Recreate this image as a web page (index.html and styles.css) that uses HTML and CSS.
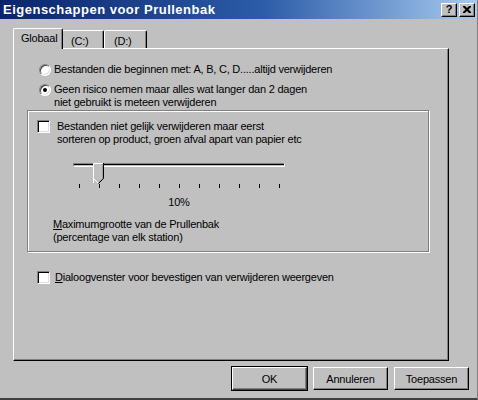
FILE: index.html
```html
<!DOCTYPE html>
<html lang="nl">
<head>
    <meta charset="UTF-8">
    <title>Eigenschappen voor Prullenbak</title>
    <link rel="stylesheet" href="styles.css">
</head>
<body>
    <div class="window">
        <div class="titlebar">
            <span class="title">Eigenschappen voor Prullenbak</span>
            <div class="title-buttons">
                <span class="title-btn help">?</span>
                <span class="title-btn close">
                    <svg width="8" height="7" viewBox="0 0 8 7">
                        <path d="M0 0h2l2 2 2-2h2v1l-2.5 2.5 2.5 2.5v1h-2l-2-2-2 2h-2v-1l2.5-2.5-2.5-2.5z" fill="#000"/>
                    </svg>
                </span>
            </div>
        </div>

        <div class="tabs">
            <div class="tab active">Globaal</div>
            <div class="tab">(C:)</div>
            <div class="tab">(D:)</div>
        </div>

        <div class="panel">
            <div class="option first">
                <span class="radio"></span>
                <span>Bestanden die beginnen met: A, B, C, D.....altijd verwijderen</span>
            </div>
            <div class="option">
                <span class="radio checked"></span>
                <span>Geen risico nemen maar alles wat langer dan 2 dagen<br>niet gebruikt is meteen verwijderen</span>
            </div>

            <div class="group">
                <div class="check-row">
                    <span class="checkbox"></span>
                    <span>Bestanden niet gelijk verwijderen maar eerst<br>sorteren op product, groen afval apart van papier etc</span>
                </div>

                <div class="slider">
                    <div class="track"></div>
                    <svg class="thumb" width="11" height="21" viewBox="0 0 11 21">
                        <path d="M0.5 20V0.5H10" fill="none" stroke="#fff"/>
                        <path d="M10.5 0V15.5L5.5 20.5" fill="none" stroke="#000"/>
                        <path d="M9.5 1V15L5.5 19" fill="none" stroke="#808080"/>
                        <path d="M1 1H9.5V15L5.5 19L1 15Z" fill="#c0c0c0"/>
                        <path d="M0.5 15.5L5 20" fill="none" stroke="#fff"/>
                    </svg>
                </div>
                <div class="ticks">
                    <span></span><span></span><span></span><span></span><span></span><span></span>
                    <span></span><span></span><span></span><span></span><span></span>
                </div>
                <div class="percent">10%</div>

                <div class="size-label"><u>M</u>aximumgrootte van de Prullenbak<br>(percentage van elk station)</div>
            </div>

            <div class="check-row confirm">
                <span class="checkbox"></span>
                <span><u>D</u>ialoogvenster voor bevestigen van verwijderen weergeven</span>
            </div>
        </div>

        <div class="buttons">
            <button class="btn default">OK</button>
            <button class="btn">Annuleren</button>
            <button class="btn">Toepassen</button>
        </div>
    </div>
</body>
</html>
```

FILE: styles.css
```css
* {
    margin: 0;
    padding: 0;
    box-sizing: border-box;
}

body {
    font-family: 'Liberation Sans', Arial, sans-serif;
    font-size: 11px;
    line-height: 13px;
    letter-spacing: -0.22px;
    color: #000;
    background: #c0c0c0;
}

.window {
    width: 478px;
    height: 400px;
    background: #c0c0c0;
    border-bottom: 2px solid #404040;
    border-right: 1px solid #808080;
    overflow: hidden;
}

/* title bar */
.titlebar {
    height: 19px;
    display: flex;
    align-items: center;
    justify-content: space-between;
    padding: 0 2px 0 3px;
    background: linear-gradient(to right, #0a246a, #2c5ca8 55%, #a6caf0);
}

.title {
    color: #fff;
    font-weight: bold;
    font-size: 13px;
    letter-spacing: 0.5px;
}

.title-buttons {
    display: flex;
    gap: 2px;
}

.title-btn {
    width: 16px;
    height: 14px;
    display: flex;
    align-items: center;
    justify-content: center;
    background: #c0c0c0;
    border-top: 1px solid #fff;
    border-left: 1px solid #fff;
    border-right: 1px solid #000;
    border-bottom: 1px solid #000;
    box-shadow: inset -1px -1px 0 #808080;
    font-weight: bold;
    font-size: 11px;
    letter-spacing: 0;
}

/* tabs */
.tabs {
    display: flex;
    align-items: flex-end;
    height: 20px;
    margin: 9px 0 0 15px;
}

.tab {
    height: 18px;
    padding: 4px 0 0 9px;
    border-top: 1px solid #fff;
    border-left: 1px solid #fff;
    border-right: 1px solid #000;
    border-radius: 2px 2px 0 0;
    box-shadow: inset -1px 0 0 #808080;
}

.tab:nth-child(2) { width: 43px; }
.tab:nth-child(3) { width: 43px; }

.tab.active {
    width: 50px;
    height: 21px;
    margin: 0 -2px -1px -2px;
    padding: 3px 0 0 7px;
    background: #c0c0c0;
    position: relative;
    z-index: 1;
}

/* panel */
.panel {
    width: 436px;
    height: 313px;
    margin-left: 13px;
    border-top: 1px solid #fff;
    border-left: 1px solid #fff;
    border-right: 1px solid #000;
    border-bottom: 1px solid #000;
    box-shadow: inset -1px -1px 0 #808080;
    padding: 14px 0 0 25px;
}

.option {
    display: flex;
    align-items: flex-start;
    gap: 3px;
}

.option + .option {
    margin-top: 7px;
}

.radio {
    width: 12px;
    height: 12px;
    margin-top: 1px;
    border-radius: 50%;
    background: #fff;
    border: 1px solid;
    border-color: #808080 #fff #fff #808080;
    box-shadow: inset 1px 1px 0 #404040, inset -1px -1px 0 #dfdfdf;
    display: flex;
    align-items: center;
    justify-content: center;
}

.radio.checked::after {
    content: '';
    width: 4px;
    height: 4px;
    border-radius: 50%;
    background: #000;
}

.checkbox {
    width: 13px;
    height: 13px;
    flex-shrink: 0;
    background: #fff;
    border: 1px solid;
    border-color: #808080 #fff #fff #808080;
    box-shadow: inset 1px 1px 0 #000, inset -1px -1px 0 #dfdfdf;
}

/* group box */
.group {
    width: 402px;
    height: 142px;
    margin: 1px 0 0 -12px;
    border: 1px solid #808080;
    box-shadow: 1px 1px 0 #fff, inset 1px 1px 0 #fff;
    padding: 9px 0 0 9px;
}

.check-row {
    display: flex;
    align-items: flex-start;
    gap: 7px;
}

.slider {
    position: relative;
    width: 212px;
    height: 20px;
    margin: 17px 0 0 36px;
}

.track {
    margin-top: 7px;
    height: 4px;
    border-top: 1px solid #808080;
    border-left: 1px solid #808080;
    border-bottom: 1px solid #fff;
    border-right: 1px solid #fff;
    box-shadow: inset 0 1px 0 #000;
}

.thumb {
    position: absolute;
    left: 20px;
    top: 0;
}

.ticks {
    display: flex;
    justify-content: space-between;
    width: 201px;
    height: 5px;
    margin: 1px 0 0 42px;
}

.ticks span {
    width: 1px;
    height: 4px;
    background: #000;
}

.percent {
    width: 212px;
    margin: 7px 0 0 36px;
    text-align: center;
}

.size-label {
    margin: 9px 0 0 16px;
}

.check-row.confirm {
    margin: 19px 0 0 -2px;
    gap: 5px;
}

/* bottom buttons */
.buttons {
    display: flex;
    justify-content: flex-end;
    gap: 6px;
    margin: 6px 8px 0 0;
}

.btn {
    width: 75px;
    height: 23px;
    font-family: inherit;
    font-size: 11px;
    letter-spacing: -0.2px;
    color: #000;
    background: #c0c0c0;
    border-top: 1px solid #fff;
    border-left: 1px solid #fff;
    border-right: 1px solid #000;
    border-bottom: 1px solid #000;
    box-shadow: inset -1px -1px 0 #808080;
}

.btn.default {
    border-color: #fff #404040 #404040 #fff;
    box-shadow: 0 0 0 1px #000, inset -1px -1px 0 #808080;
}
```
